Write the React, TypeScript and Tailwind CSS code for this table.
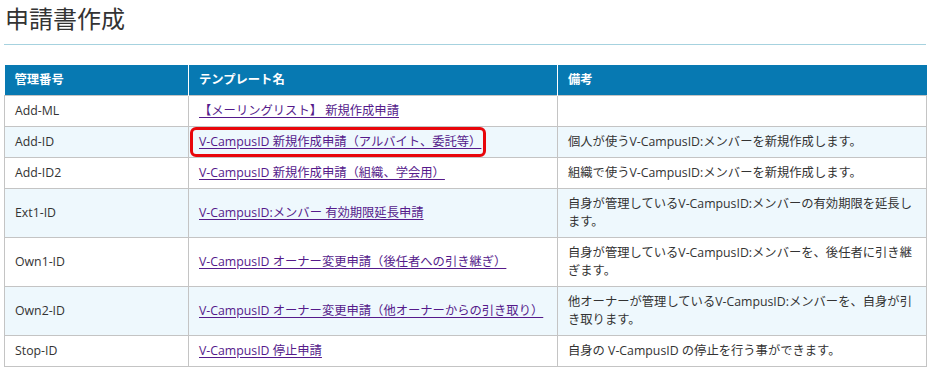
import React from "react";

type Template = {
  code: string;
  name: string;
  note: string;
  marked?: boolean;
};

const templates: Template[] = [
  { code: "Add-ML", name: "【メーリングリスト】 新規作成申請", note: "" },
  {
    code: "Add-ID",
    name: "V-CampusID 新規作成申請（アルバイト、委託等）",
    note: "個人が使うV-CampusID:メンバーを新規作成します。",
    marked: true,
  },
  {
    code: "Add-ID2",
    name: "V-CampusID 新規作成申請（組織、学会用）",
    note: "組織で使うV-CampusID:メンバーを新規作成します。",
  },
  {
    code: "Ext1-ID",
    name: "V-CampusID:メンバー 有効期限延長申請",
    note: "自身が管理しているV-CampusID:メンバーの有効期限を延長します。",
  },
  {
    code: "Own1-ID",
    name: "V-CampusID オーナー変更申請（後任者への引き継ぎ）",
    note: "自身が管理しているV-CampusID:メンバーを、後任者に引き継ぎます。",
  },
  {
    code: "Own2-ID",
    name: "V-CampusID オーナー変更申請（他オーナーからの引き取り）",
    note: "他オーナーが管理しているV-CampusID:メンバーを、自身が引き取ります。",
  },
  {
    code: "Stop-ID",
    name: "V-CampusID 停止申請",
    note: "自身の V-CampusID の停止を行う事ができます。",
  },
];

export default function App() {
  return (
    <div className="min-h-[375px] bg-white pl-[4px] pr-[7px] text-[#333] [font-family:'Open_Sans','Noto_Sans_CJK_JP',sans-serif]">
      <h1 className="pl-[1px] pt-[3px] text-[24px] font-normal leading-[32px] text-[#333]">申請書作成</h1>
      <hr className="mt-[9px] border-0 border-t border-[#a6d2df]" />

      <table className="mt-[20px] w-[922px] table-fixed border-collapse text-[12.3px] leading-[18px]">
        <colgroup>
          <col className="w-[184px]" />
          <col className="w-[369px]" />
          <col className="w-[369px]" />
        </colgroup>
        <thead>
          <tr className="bg-[#0779b2] text-left text-white">
            <th className="border-r border-white px-[10px] py-[6px] font-bold">管理番号</th>
            <th className="border-r border-white px-[10px] py-[6px] font-bold">テンプレート名</th>
            <th className="px-[10px] py-[6px] font-bold">備考</th>
          </tr>
        </thead>
        <tbody>
          {templates.map((t, i) => (
            <tr key={t.code} className={i % 2 === 1 ? "bg-[#eef8fd]" : "bg-white"}>
              <td className="border border-[#c4c4c4] px-[10px] py-[6px] align-middle">{t.code}</td>
              <td className="border border-[#c4c4c4] px-[10px] py-[6px] align-middle">
                <span className="relative inline-block">
                  <a href="#" className="text-[#551a8b] underline underline-offset-2">
                    {t.name}
                  </a>
                  {t.marked ? (
                    <span className="pointer-events-none absolute -bottom-[6px] -left-[9px] -right-[5px] -top-[6px] rounded-[6px] border-[3px] border-[#e8060b]" />
                  ) : null}
                </span>
              </td>
              <td className="border border-[#c4c4c4] px-[10px] py-[6px] align-middle">{t.note}</td>
            </tr>
          ))}
        </tbody>
      </table>
    </div>
  );
}
